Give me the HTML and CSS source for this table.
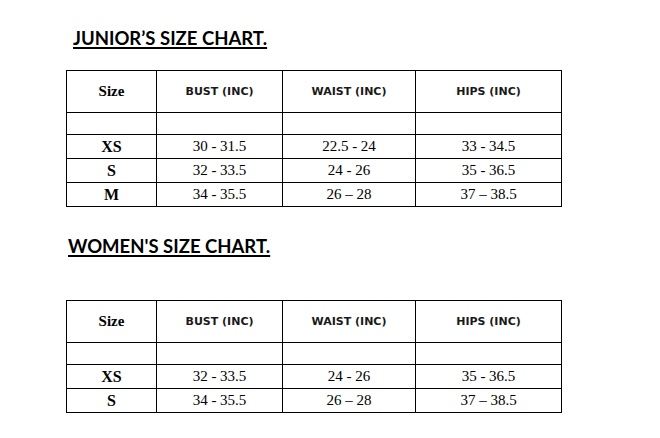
FILE: index.html
```html
<!DOCTYPE html>
<html lang="en">
<head>
    <meta charset="UTF-8">
    <title>Size Chart</title>
    <link rel="stylesheet" href="styles.css">
</head>
<body>
    <div class="chart">
        <h2 class="chart-title chart-title-junior">JUNIOR’S SIZE CHART.</h2>
        <table class="size-table">
            <colgroup>
                <col class="col-size">
                <col class="col-bust">
                <col class="col-waist">
                <col class="col-hips">
            </colgroup>
            <tr class="head-row">
                <th class="size-head">Size</th>
                <th>BUST (INC)</th>
                <th>WAIST (INC)</th>
                <th>HIPS (INC)</th>
            </tr>
            <tr class="empty-row"><td></td><td></td><td></td><td></td></tr>
            <tr><td class="size">XS</td><td>30 - 31.5</td><td>22.5 - 24</td><td>33 - 34.5</td></tr>
            <tr><td class="size">S</td><td>32 - 33.5</td><td>24 - 26</td><td>35 - 36.5</td></tr>
            <tr><td class="size">M</td><td>34 - 35.5</td><td>26 – 28</td><td>37 – 38.5</td></tr>
        </table>
    </div>

    <div class="chart chart-women">
        <h2 class="chart-title">WOMEN'S SIZE CHART.</h2>
        <table class="size-table">
            <colgroup>
                <col class="col-size">
                <col class="col-bust">
                <col class="col-waist">
                <col class="col-hips">
            </colgroup>
            <tr class="head-row">
                <th class="size-head">Size</th>
                <th>BUST (INC)</th>
                <th>WAIST (INC)</th>
                <th>HIPS (INC)</th>
            </tr>
            <tr class="empty-row"><td></td><td></td><td></td><td></td></tr>
            <tr><td class="size">XS</td><td>32 - 33.5</td><td>24 - 26</td><td>35 - 36.5</td></tr>
            <tr><td class="size">S</td><td>34 - 35.5</td><td>26 – 28</td><td>37 – 38.5</td></tr>
        </table>
    </div>
</body>
</html>
```

FILE: styles.css
```css
body {
    margin: 0;
    padding: 0;
    background: #fff;
    color: #000;
}
.chart {
    padding-left: 66px;
    padding-top: 26px;
}
.chart-women {
    padding-top: 27px;
}
.chart-title {
    font-family: Lato, "Open Sans", sans-serif;
    font-weight: bold;
    font-size: 18.5px;
    line-height: 24px;
    margin: 0 0 20px 2px;
    text-decoration: underline;
    text-decoration-thickness: 2px;
    text-underline-offset: 2px;
}
.chart-title-junior {
    margin-left: 7px;
}
.chart-women .chart-title {
    margin-bottom: 42px;
}
.size-table {
    border-collapse: collapse;
    table-layout: fixed;
    width: 495px;
}
.col-size { width: 90px; }
.col-bust { width: 126px; }
.col-waist { width: 133px; }
.col-hips { width: 146px; }
.size-table th,
.size-table td {
    border: 1px solid #000;
    padding: 0;
    text-align: center;
    vertical-align: middle;
    font-family: "Liberation Serif", "Times New Roman", serif;
    font-size: 15px;
    height: 23px;
}
.size-table th {
    font-family: "DejaVu Sans", Verdana, sans-serif;
    font-size: 11px;
    font-weight: bold;
    color: #1a1a1a;
}
.size-table .head-row th {
    height: 41px;
}
.size-table .empty-row td {
    height: 21px;
}
.size-table th.size-head {
    font-family: "Liberation Serif", "Times New Roman", serif;
    font-size: 15px;
    color: #000;
}
.size-table td.size {
    font-weight: bold;
    font-size: 16px;
}
```
